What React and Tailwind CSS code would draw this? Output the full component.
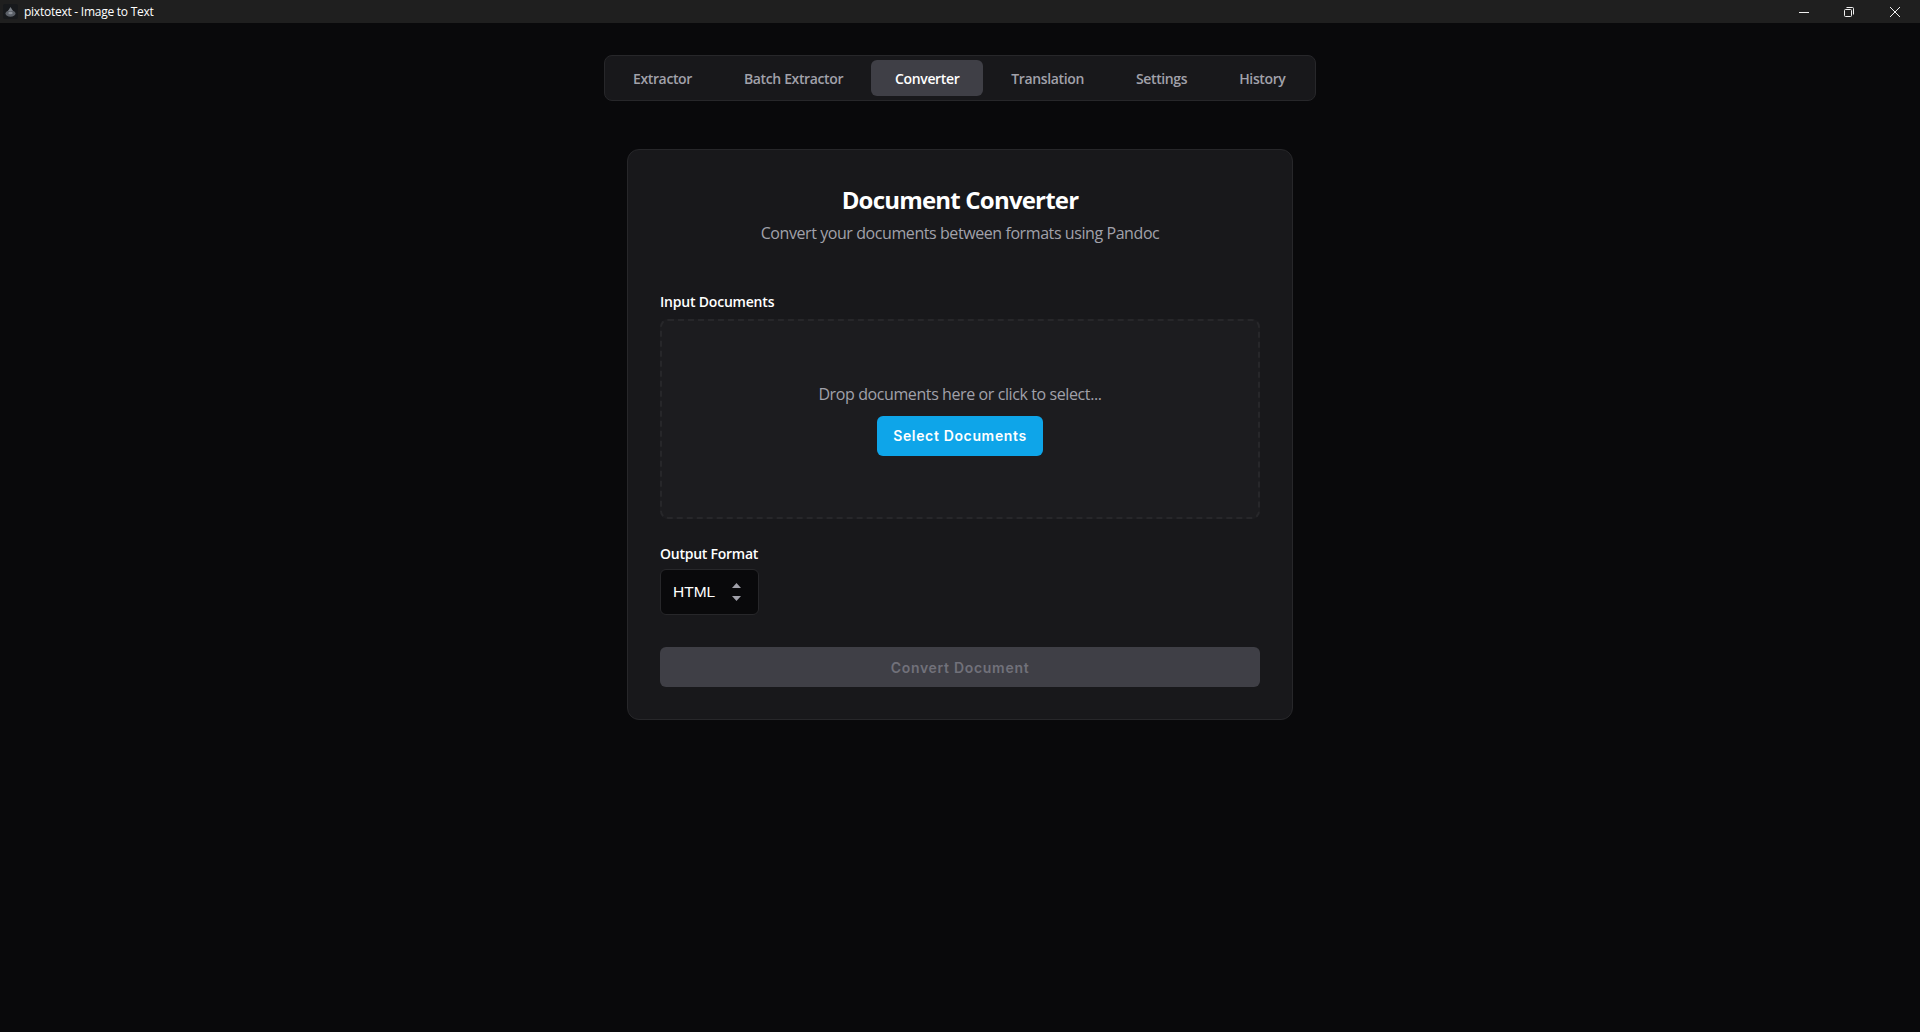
const tabs = ["Extractor", "Batch Extractor", "Converter", "Translation", "Settings", "History"];

export default function App() {
  return (
    <div className="h-[1032px] overflow-hidden bg-[#09090b] font-['Open_Sans',sans-serif] text-white flex flex-col">
      {/* title bar */}
      <div className="h-[23px] bg-[#1f1f1f] flex items-center justify-between shrink-0">
        <div className="flex items-center pl-[3px]">
          <svg width="15" height="15" viewBox="0 0 15 15">
            <rect width="15" height="15" rx="2" fill="#17191c" />
            <ellipse cx="7.5" cy="9.5" rx="5" ry="3.2" fill="#5b6068" />
            <path d="M7.5 3 L10 7 H5 Z" fill="#7b8088" />
            <ellipse cx="7.5" cy="9" rx="2.2" ry="1.2" fill="#8d929a" />
          </svg>
          <span className="ml-[6px] text-[12px] tracking-[-0.25px] text-white">pixtotext - Image to Text</span>
        </div>
        <div className="flex items-center text-[#f0f0f0] pr-[2px]">
          <div className="w-[45px] flex justify-center">
            <svg width="10" height="10" viewBox="0 0 10 10" fill="none" stroke="currentColor">
              <path d="M0 5.5H10" />
            </svg>
          </div>
          <div className="w-[46px] flex justify-center">
            <svg width="10" height="10" viewBox="0 0 10 10" fill="none" stroke="currentColor">
              <rect x="0.5" y="2.5" width="7" height="7" rx="1" />
              <path d="M2.5 0.5H8.5A1 1 0 0 1 9.5 1.5V7.5" />
            </svg>
          </div>
          <div className="w-[46px] flex justify-center">
            <svg width="10" height="10" viewBox="0 0 10 10" fill="none" stroke="currentColor">
              <path d="M0 0L10 10M10 0L0 10" />
            </svg>
          </div>
        </div>
      </div>

      <div className="flex flex-col items-center pt-[32px]">
        {/* tabs */}
        <div className="w-[712px] h-[46px] bg-[#18181b] border border-[#27272a] rounded-lg flex items-center gap-1 px-1">
          {tabs.map((t) => (
            <div
              key={t}
              className={
                t === "Converter"
                  ? "h-9 px-6 pt-[2px] flex items-center whitespace-nowrap rounded-md bg-[#3f3f46] text-white text-sm font-semibold tracking-[-0.37px]"
                  : "h-9 px-6 pt-[2px] flex items-center whitespace-nowrap rounded-md text-[#a1a1aa] text-sm font-semibold tracking-[-0.37px]"
              }
            >
              {t}
            </div>
          ))}
        </div>

        {/* converter card */}
        <div className="mt-[48px] w-[666px] h-[571px] bg-[#18181b] border border-[#27272a] rounded-xl px-8 pt-8">
          <h1 className="text-center text-2xl font-bold leading-9 tracking-[-0.8px]">Document Converter</h1>
          <p className="mt-[3px] text-center text-base leading-6 tracking-[-0.42px] text-[#a1a1aa]">Convert your documents between formats using Pandoc</p>

          <div className="mt-[47px] text-sm font-semibold leading-5 tracking-[-0.2px]">Input Documents</div>
          <div className="mt-[7px] h-[200px] rounded-lg border-2 border-dashed border-[#27272a] bg-[#1c1c1f] flex flex-col items-center justify-center">
            <div className="text-base leading-6 tracking-[-0.4px] text-[#a1a1aa]">Drop documents here or click to select...</div>
            <button className="mt-[10px] mb-[1px] h-10 w-[166px] rounded-md bg-[#0ea5e9] text-white font-['Inter',sans-serif] text-sm font-semibold tracking-[0.65px]">Select Documents</button>
          </div>

          <div className="mt-[25px] text-sm font-semibold leading-5 tracking-[-0.25px]">Output Format</div>
          <div className="mt-[5px] w-[99px] h-[46px] rounded-md bg-[#09090b] border border-[#27272a] flex items-center justify-between pl-3 pr-[17px]">
            <span className="font-['Liberation_Sans',sans-serif] text-[15.5px]">HTML</span>
            <svg width="9" height="18" viewBox="0 0 9 18" fill="#a1a1aa">
              <path d="M4.5 0 L9 5 H0 Z" />
              <path d="M4.5 18 L9 13 H0 Z" />
            </svg>
          </div>

          <button className="mt-[32px] pt-px w-full h-10 rounded-md bg-[#3f3f46] text-[#71717a] font-['Inter',sans-serif] text-sm font-semibold tracking-[0.7px]">Convert Document</button>
        </div>
      </div>
    </div>
  );
}
